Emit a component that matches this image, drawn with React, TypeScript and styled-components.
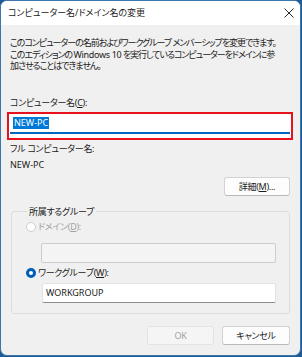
import * as React from "react";
import styled, { createGlobalStyle } from "styled-components";

const GlobalStyle = createGlobalStyle`
  html, body {
    margin: 0;
    padding: 0;
    background: #1f5b94;
  }
  body {
    font-family: "Noto Sans", "Noto Sans CJK JP", sans-serif;
    font-feature-settings: "palt";
    color: #1b1b1b;
  }
`;

const Desktop = styled.div`
  width: 302px;
  height: 357px;
  background: #1f5b94;
`;

const Window = styled.div`
  width: 301px;
  height: 356px;
  box-sizing: border-box;
  border: 1px solid #3b76ac;
  border-radius: 7px;
  overflow: hidden;
  display: flex;
  flex-direction: column;
  background: #f0f0f0;
`;

const TitleBar = styled.div`
  height: 24px;
  flex: none;
  background: #ffffff;
  display: flex;
  align-items: center;
  justify-content: space-between;
  padding-left: 7px;
`;

const Title = styled.span`
  font-size: 9px;
  line-height: 12px;
  color: #1b1b1b;
  white-space: nowrap;
`;

const CloseButton = styled.div`
  width: 22px;
  height: 24px;
  display: flex;
  align-items: center;
  justify-content: center;
`;

const Body = styled.div`
  flex: 1;
  display: flex;
  flex-direction: column;
  padding: 12px 10px 0 9px;
  font-size: 9px;
  letter-spacing: -0.3px;
`;

const Description = styled.div`
  line-height: 11.5px;
  letter-spacing: -1.05px;
`;

const Line = styled.div`
  white-space: nowrap;
`;

const Latin = styled.span<{ $tight?: boolean }>`
  letter-spacing: ${(p) => (p.$tight ? "-0.3px" : "0")};
`;

const Label = styled.div<{ $top?: number; $disabled?: boolean }>`
  line-height: 12px;
  margin-top: ${(p) => p.$top ?? 0}px;
  color: ${(p) => (p.$disabled ? "#a2a2a2" : "#1b1b1b")};
  white-space: nowrap;
`;

const Key = styled.span`
  text-decoration: underline;
  text-underline-offset: 1px;
`;

const Highlight = styled.div`
  margin: 3px -3px 0 -3px;
  border: 2px solid #e8121e;
  background: #ffffff;
  padding: 1px 1px 4px 1px;
`;

const NameInput = styled.div`
  height: 19px;
  box-sizing: border-box;
  border-bottom: 2px solid #0067c0;
  display: flex;
  align-items: center;
  padding-left: 3px;
`;

const Selected = styled.span`
  background: #0078d7;
  color: #ffffff;
  line-height: 12px;
  padding: 0 1px;
  letter-spacing: 0;
`;

const Button = styled.div<{ $disabled?: boolean; $width: number }>`
  width: ${(p) => p.$width}px;
  height: 19px;
  box-sizing: border-box;
  border: 1px solid ${(p) => (p.$disabled ? "#e3e3e3" : "#d2d2d2")};
  border-bottom-color: ${(p) => (p.$disabled ? "#e3e3e3" : "#b8b8b8")};
  border-radius: 3px;
  background: ${(p) => (p.$disabled ? "#f5f5f5" : "#fdfdfd")};
  color: ${(p) => (p.$disabled ? "#a2a2a2" : "#1b1b1b")};
  display: flex;
  align-items: center;
  justify-content: center;
  white-space: nowrap;
`;

const DetailsRow = styled.div`
  display: flex;
  justify-content: flex-end;
  margin-top: 6px;
`;

const Group = styled.fieldset`
  margin: 10px 0 0 1px;
  padding: 0 13px 10px 14px;
  border: 1px solid #dcdcdc;
  border-radius: 3px;
  min-width: 0;
`;

const Legend = styled.legend`
  padding: 0 2px;
  margin-left: 1px;
  line-height: 12px;
`;

const RadioRow = styled.div<{ $top: number; $disabled?: boolean }>`
  display: flex;
  align-items: center;
  gap: 2px;
  margin-top: ${(p) => p.$top}px;
  line-height: 12px;
  color: ${(p) => (p.$disabled ? "#a2a2a2" : "#1b1b1b")};
`;

const Radio = styled.span<{ $checked?: boolean }>`
  width: 10px;
  height: 10px;
  box-sizing: border-box;
  border-radius: 50%;
  flex: none;
  background: #ffffff;
  border: ${(p) => (p.$checked ? "3px solid #005fb8" : "1px solid #cfcfcf")};
`;

const TextBox = styled.div<{ $disabled?: boolean; $top: number }>`
  margin: ${(p) => p.$top}px 0 0 ${(p) => (p.$disabled ? 15 : 16)}px;
  height: 20px;
  box-sizing: border-box;
  border: 1px solid ${(p) => (p.$disabled ? "#cdcdcd" : "#e2e2e2")};
  border-bottom-color: ${(p) => (p.$disabled ? "#cdcdcd" : "#8c8c8c")};
  border-radius: 2px;
  background: ${(p) => (p.$disabled ? "#f4f4f4" : "#ffffff")};
  display: flex;
  align-items: center;
  padding-left: 3px;
  letter-spacing: 0;
`;

const Footer = styled.div`
  display: flex;
  justify-content: flex-end;
  gap: 8px;
  margin-top: 12px;
`;

export default function App() {
  return (
    <Desktop>
      <GlobalStyle />
      <Window>
        <TitleBar>
          <Title>コンピューター名/ドメイン名の変更</Title>
          <CloseButton>
            <svg width="10" height="10" viewBox="0 0 10 10">
              <path d="M0.5 0.5 L9.5 9.5 M9.5 0.5 L0.5 9.5" stroke="#2b2b2b" strokeWidth="1" fill="none" />
            </svg>
          </CloseButton>
        </TitleBar>
        <Body>
          <Description>
            <Line>このコンピューターの名前およびワークグループ メンバーシップを変更できます。</Line>
            <Line>
              このエディションの <Latin $tight>Windows 10</Latin> を実行しているコンピューターをドメインに参
            </Line>
            <Line>加させることはできません。</Line>
          </Description>
          <Label $top={25}>
            コンピューター名(<Key>C</Key>):
          </Label>
          <Highlight>
            <NameInput>
              <Selected>NEW-PC</Selected>
            </NameInput>
          </Highlight>
          <Label $top={3}>フル コンピューター名:</Label>
          <Label $top={4}>
            <Latin>NEW-PC</Latin>
          </Label>
          <DetailsRow>
            <Button $width={66}>
              詳細(<Key>M</Key>)...
            </Button>
          </DetailsRow>
          <Group>
            <Legend>所属するグループ</Legend>
            <RadioRow $top={3} $disabled>
              <Radio />
              <span>
                ドメイン(<Key>D</Key>):
              </span>
            </RadioRow>
            <TextBox $disabled $top={10} />
            <RadioRow $top={4}>
              <Radio $checked />
              <span>
                ワークグループ(<Key>W</Key>):
              </span>
            </RadioRow>
            <TextBox $top={4}>WORKGROUP</TextBox>
          </Group>
          <Footer>
            <Button $width={67} $disabled>
              OK
            </Button>
            <Button $width={68}>キャンセル</Button>
          </Footer>
        </Body>
      </Window>
    </Desktop>
  );
}
